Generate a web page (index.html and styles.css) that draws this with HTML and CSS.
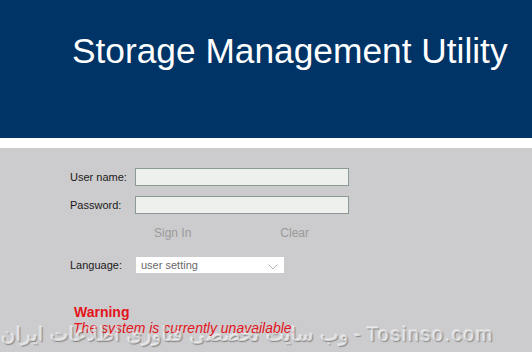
FILE: index.html
```html
<!DOCTYPE html>
<html>
<head>
<meta charset="utf-8">
<title>Storage Management Utility</title>
<link rel="stylesheet" href="styles.css">
</head>
<body>
<header class="banner">
  <h1 class="title">Storage Management Utility</h1>
</header>
<main class="content">
  <form class="login">
    <label class="label" for="user">User name:</label>
    <input class="field" id="user" type="text">
    <label class="label" for="pass">Password:</label>
    <input class="field" id="pass" type="password">
    <div class="actions">
      <span class="btn btn-sign">Sign In</span>
      <span class="btn btn-clear">Clear</span>
    </div>
  </form>
  <div class="lang-row">
    <span class="label">Language:</span>
    <div class="select">
      <span class="select-text">user setting</span>
      <svg class="chevron" width="10" height="6" viewBox="0 0 10 6"><polyline points="0.5,0.5 5,5 9.5,0.5" fill="none" stroke="#b4b4b4" stroke-width="1"/></svg>
    </div>
  </div>
  <div class="warning">
    <div class="warn-title">Warning</div>
    <div class="warn-text">The system is currently unavailable.</div>
  </div>
</main>
<div class="watermark"><span class="wm-fa" dir="rtl">وب سایت تخصصی فناوری اطلاعات ایران</span> - <span class="wm-en">Tosinso.com</span></div>
</body>
</html>
```
FILE: styles.css
```css
html, body {
  margin: 0;
  padding: 0;
}
body {
  width: 532px;
  height: 352px;
  overflow: hidden;
  position: relative;
  background: #cccbcd;
  font-family: "Liberation Sans", Arial, "DejaVu Sans", sans-serif;
}
.banner {
  height: 138px;
  background: #003366;
  border-bottom: 10px solid #ffffff;
}
.title {
  margin: 0;
  padding: 31px 0 0 72px;
  font-size: 35.3px;
  line-height: 40px;
  font-weight: normal;
  color: #ffffff;
}
.content {
  padding: 20px 0 0 70px;
}
.login {
  margin: 0;
  display: grid;
  grid-template-columns: 65px 214px;
  grid-auto-rows: 18px;
  row-gap: 10px;
}
.label {
  font-size: 11px;
  line-height: 18px;
  color: #1a1a1a;
}
.field {
  box-sizing: border-box;
  width: 214px;
  height: 18px;
  margin: 0;
  padding: 0 3px;
  border: 1px solid #8c9a94;
  background: #eef0ee;
  outline: none;
}
.actions {
  grid-column: 2;
  display: flex;
  align-items: center;
}
.btn {
  font-size: 12px;
  line-height: 18px;
  color: #9a9a9a;
}
.btn-sign {
  margin-left: 19px;
}
.btn-clear {
  margin-left: 89px;
}
.lang-row {
  display: flex;
  align-items: center;
  margin-top: 15px;
  height: 16px;
}
.lang-row .label {
  width: 66px;
  line-height: 16px;
}
.select {
  width: 148px;
  height: 16px;
  background: #ffffff;
  display: flex;
  align-items: center;
  justify-content: space-between;
  padding: 0 6px 0 5px;
  box-sizing: border-box;
}
.select-text {
  font-size: 11px;
  color: #6a6a6a;
}
.chevron {
  margin-top: 3px;
}
.warning {
  margin-top: 31px;
  padding-left: 4px;
  color: #e4141c;
}
.warn-title {
  font-size: 14px;
  line-height: 16px;
  font-weight: bold;
}
.warn-text {
  font-size: 14px;
  line-height: 16px;
  font-style: italic;
  margin-left: -1px;
}
.watermark {
  position: absolute;
  right: 38px;
  top: 322px;
  white-space: nowrap;
  font-size: 20px;
  line-height: 24px;
  color: rgba(255, 255, 255, 0.55);
  text-shadow: 1px 1px 1px rgba(60, 60, 60, 0.45), -1px -1px 0 rgba(255, 255, 255, 0.4);
}
.wm-fa {
  font-family: "DejaVu Sans", sans-serif;
  font-size: 20px;
}
.wm-en {
  letter-spacing: 1.5px;
}
```
